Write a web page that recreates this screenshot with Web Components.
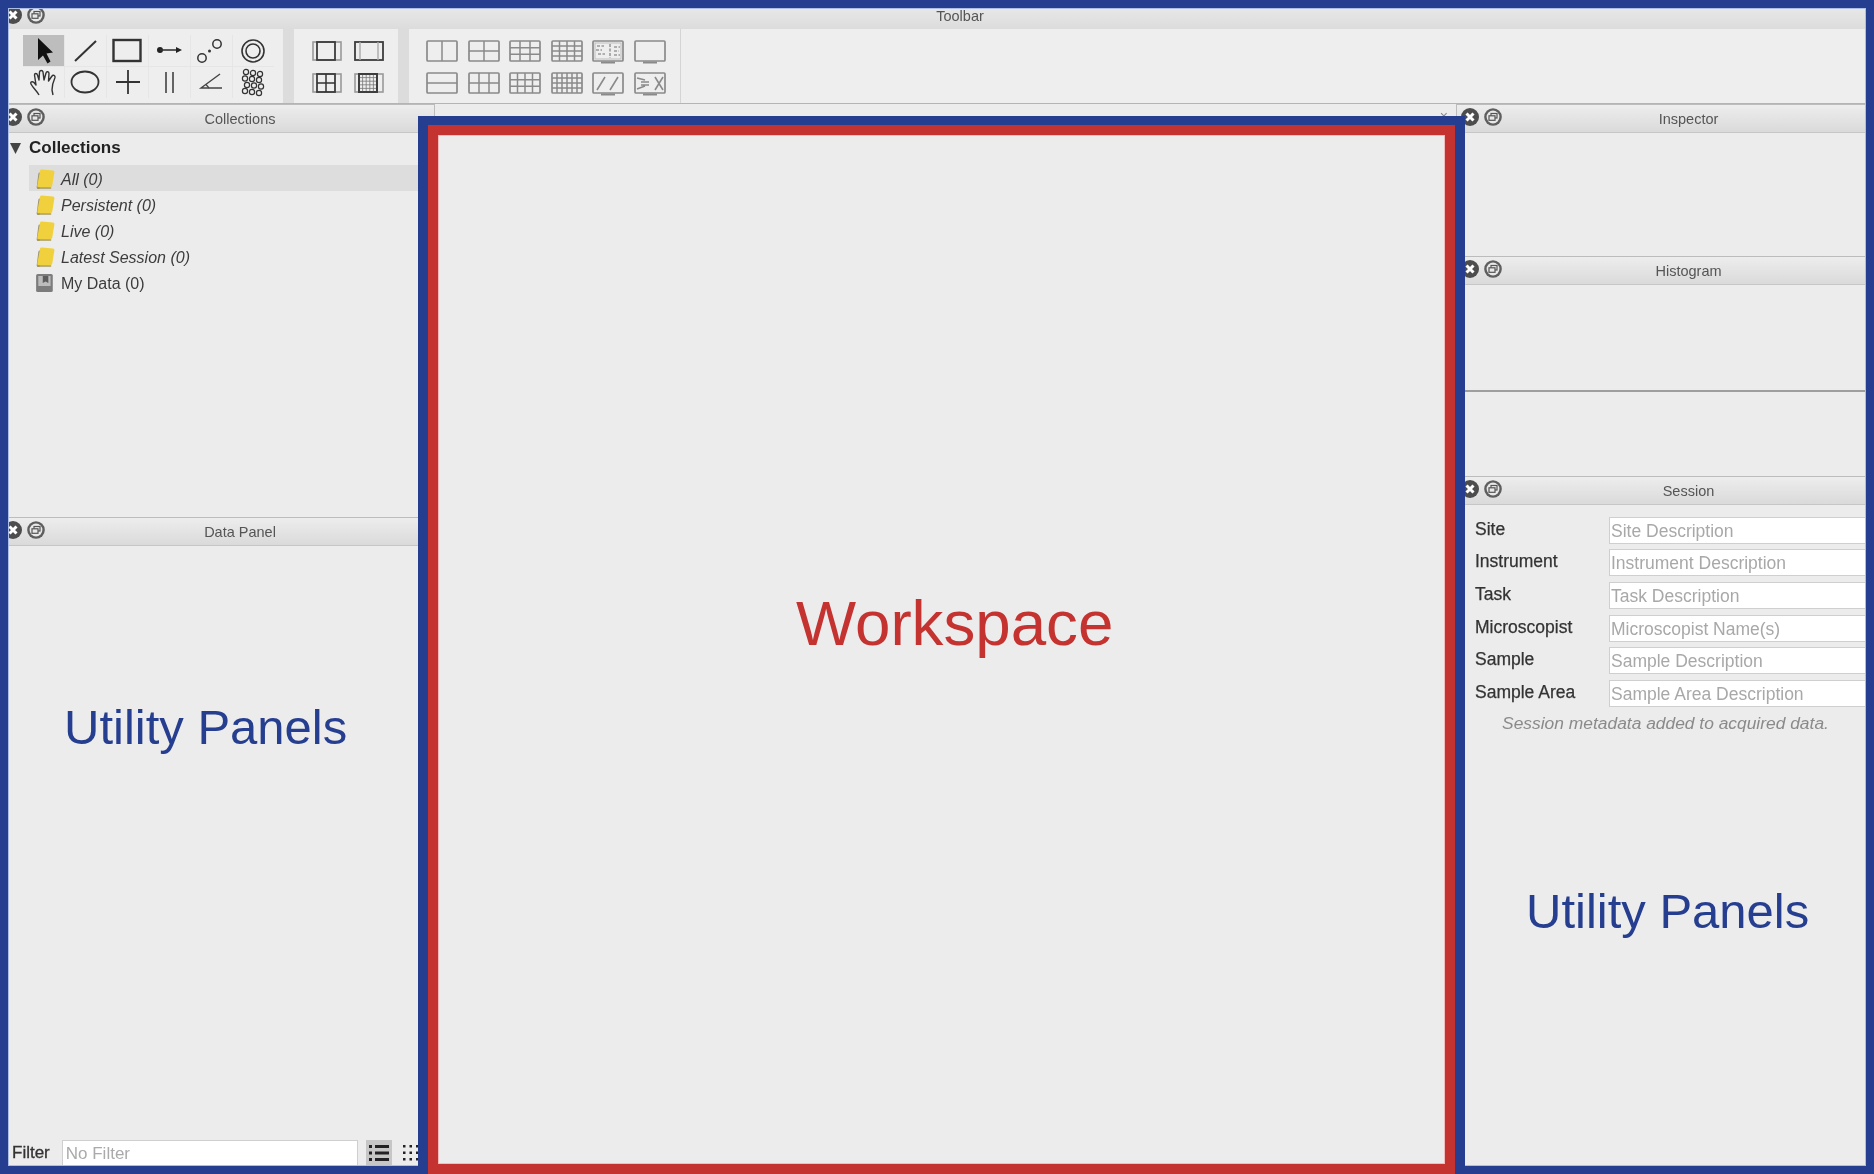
<!DOCTYPE html>
<html>
<head>
<meta charset="utf-8">
<title>Workspace</title>
<style>
    html, body { margin: 0; padding: 0; background: #ececec; }
    body { width: 1874px; height: 1174px; overflow: hidden; position: relative; font-family: "Liberation Sans", Arial, sans-serif; }
</style>
</head>
<body>
<app-shell>
    <tool-bar slot="top"></tool-bar>
    <dock-column slot="left" style="width:434px">
        <dock-panel label="Collections" style="height:413px"><collection-tree></collection-tree></dock-panel>
        <dock-panel label="Data Panel" style="flex:1"><data-panel></data-panel></dock-panel>
    </dock-column>
    <work-area slot="center"></work-area>
    <dock-column slot="right" style="width:417px">
        <dock-panel label="Inspector" style="height:152px"></dock-panel>
        <dock-panel label="Histogram" style="height:220px"><histogram-box></histogram-box></dock-panel>
        <dock-panel label="Session" style="flex:1"><session-form></session-form></dock-panel>
    </dock-column>
</app-shell>

<annot-frame color="#263e8f" halo="#aebde2" width="8" style="left:0;top:0;width:1874px;height:1174px"></annot-frame>
<annot-frame color="#263e8f" halo="#aebde2" width="10" style="left:418px;top:116px;width:1047px;height:1080px"></annot-frame>
<annot-frame color="#c53331" halo="#f2bcbc" width="10" style="left:428px;top:125px;width:1027px;height:1049px"></annot-frame>
<annot-label color="#c53331" size="63.7" style="left:796px;top:585px">Workspace</annot-label>
<annot-label color="#263e8f" size="49" style="left:64px;top:698px">Utility Panels</annot-label>
<annot-label color="#263e8f" size="49" style="left:1526px;top:882px">Utility Panels</annot-label>

<script>
// Small helpers to build the SVG of the toolbar icons
const svg = (w, h, body) => `<svg width="${w}" height="${h}" viewBox="0 0 ${w} ${h}" fill="none" stroke="#333" stroke-width="2">${body}</svg>`;

const gridLines = (x, y, w, h, cols, rows) => {
    let d = '';
    for (let i = 1; i < cols; i++) d += `M${x + w * i / cols} ${y}V${y + h}`;
    for (let i = 1; i < rows; i++) d += `M${x} ${y + h * i / rows}H${x + w}`;
    return d;
};

const lattice = () => {
    const pts = [[13,5],[20,6],[27,7],[12,11.5],[19,12],[26,13],[14,18],[21,18.5],[28,19.5],[12,24],[19,25],[26,26]];
    return pts.map(p => `<circle cx="${p[0]}" cy="${p[1]}" r="2.6" stroke-width="1.2"/>`).join('');
};

// First toolbar group, the graphic tools (6 x 2 cells)
const TOOL_ICONS = [
    `<path d="M15 3V25L20 20.5L24.5 28.5L27.5 26.5L23.5 18.5L30 17.5Z" fill="#111" stroke="none"/>`,
    `<path d="M10 26L31 6" stroke-width="2"/>`,
    `<rect x="6.5" y="5" width="27" height="21" stroke-width="2.4"/>`,
    `<circle cx="11" cy="15" r="3" fill="#222" stroke="none"/><path d="M11 15H31" stroke-width="1.6"/><path d="M33 15L27 12V18Z" fill="#222" stroke="none"/>`,
    `<circle cx="11" cy="23" r="4.2" stroke-width="1.5"/><circle cx="26" cy="9" r="4.2" stroke-width="1.5"/><circle cx="18.5" cy="16" r="1.5" fill="#333" stroke="none"/>`,
    `<circle cx="20" cy="16" r="11" stroke-width="1.6"/><circle cx="20" cy="16" r="7" stroke-width="1.6"/>`,
    `<path d="M16 28C14 24 10 21 8 17C7 15 9 14 11 15.5L13 18L11.5 8C11.5 6 14 6 14.5 8L16 13L16.5 5C17 3 19.5 3 20 5L21 13L23 6C23.5 4 26 4.5 26 6.5L25.5 14L29 9C30 7.5 32.5 8.5 32 10.5C30 15 29 20 29 23L30 28" stroke-width="1.4" stroke-linejoin="round"/>`,
    `<ellipse cx="20" cy="15" rx="13.5" ry="10.5" stroke-width="1.8"/>`,
    `<path d="M21 3V27M9 15H33" stroke-width="1.8"/>`,
    `<path d="M17 5V26M24 5V26" stroke-width="1.8" stroke="#555"/>`,
    `<path d="M29 7L10 21H31" stroke-width="1.4" stroke="#444"/><path d="M15 17.5L18 21" stroke-width="1.2" stroke="#444"/>`,
    lattice()
];

// Second toolbar group, image display modes
const frameIcon = (inner, dark) => `
    <rect x="7" y="6" width="28" height="18" stroke="${dark ? '#3c3c3c' : '#999'}" stroke-width="${dark ? 1.8 : 1.6}"/>
    ${dark ? '<path d="M12 6V24M30 6V24" stroke="#aaa" stroke-width="1.4"/>' : '<rect x="11" y="6" width="18" height="18" stroke="#3c3c3c" stroke-width="1.8"/>'}
    ${inner}`;

const MODE_ICONS = [
    frameIcon('', false),
    frameIcon('', true),
    frameIcon(`<path d="${gridLines(11, 6, 18, 18, 2, 2)}" stroke-width="1.5"/>`, false),
    frameIcon(`<path d="${gridLines(11, 6, 18, 18, 5, 5)}" stroke-width=".8" stroke="#777"/><rect x="11" y="6" width="18" height="18" stroke="#3c3c3c" stroke-width="1.8"/>`, false)
];

// Third toolbar group, the workspace layouts
const layoutIcon = (cols, rows, extra) => `
    <rect x="6" y="5" width="30" height="20" rx="1" stroke="#8a8a8a" stroke-width="1.7"/>
    <path d="${gridLines(6, 5, 30, 20, cols, rows)}" stroke="#8a8a8a" stroke-width="1.5"/>${extra || ''}`;

const MONITOR = `<path d="M14 26.5H28" stroke="#8a8a8a" stroke-width="2"/>`;

const LAYOUT_ICONS = [
    layoutIcon(2, 1),
    layoutIcon(2, 2),
    layoutIcon(3, 3),
    layoutIcon(4, 4),
    layoutIcon(1, 1, MONITOR + `<path d="M10 10H17M9 14H15M11 18H18M23 8V22M27 11H33M27 15H32M27 19H33" stroke="#9a9a9a" stroke-width="1.6" stroke-dasharray="3 1.5"/><rect x="8" y="7" width="26" height="16" stroke="#bdbdbd" stroke-width="1"/>`),
    layoutIcon(1, 1, MONITOR),
    layoutIcon(1, 2),
    layoutIcon(3, 2),
    layoutIcon(4, 3),
    layoutIcon(6, 4),
    layoutIcon(1, 1, MONITOR + `<path d="M10 22L18 9M23 22L31 9" stroke="#8a8a8a" stroke-width="1.6"/>`),
    layoutIcon(1, 1, MONITOR + `<path d="M26 9L34 22M34 9L26 22M8 10L16 12M8 21L16 18M12 14H20M12 17H20" stroke="#8a8a8a" stroke-width="1.6"/>`)
];

// Page skeleton: toolbar on top and three columns under it
class AppShell extends HTMLElement {
    constructor() {
        super();
        this.attachShadow({ mode: 'open' });
        this.shadowRoot.innerHTML = `
            <style>
                :host { display: flex; flex-direction: column; width: 1874px; height: 1174px; background: #ececec; filter: blur(.45px); }
                .cols { flex: 1; display: flex; min-height: 0; }
                ::slotted([slot="center"]) { flex: 1; }
            </style>
            <slot name="top"></slot>
            <div class="cols">
                <slot name="left"></slot>
                <slot name="center"></slot>
                <slot name="right"></slot>
            </div>
        `;
    }
}

// The round close and float buttons of every panel title
class TitleButtons extends HTMLElement {
    constructor() {
        super();
        this.attachShadow({ mode: 'open' });
        this.shadowRoot.innerHTML = `
            <style>
                :host { display: flex; gap: 5px; padding-left: 4px; width: 42px; flex: none; }
                svg { display: block; }
            </style>
            <svg width="18" height="18" viewBox="0 0 18 18">
                <circle cx="9" cy="9" r="9" fill="#4d4d4d"/>
                <path d="M5.5 5.5L12.5 12.5M12.5 5.5L5.5 12.5" stroke="#fff" stroke-width="3"/>
            </svg>
            <svg width="18" height="18" viewBox="0 0 18 18" fill="none">
                <circle cx="9" cy="9" r="8.8" fill="#5e5e5e"/>
                <circle cx="9" cy="9" r="6.4" fill="#e8e8e8"/>
                <rect x="7" y="5.5" width="6" height="4.5" stroke="#555" stroke-width="1.2"/>
                <rect x="5" y="7.8" width="6" height="4.5" fill="#e8e8e8" stroke="#555" stroke-width="1.2"/>
            </svg>
        `;
    }
}

class ToolBar extends HTMLElement {
    constructor() {
        super();
        this.attachShadow({ mode: 'open' });
        this.shadowRoot.innerHTML = `
            <style>
                :host { display: block; flex: none; height: 104px; box-sizing: border-box; border-bottom: 1px solid #b4b4b4; background: #eeeeee; }
                .title { height: 29px; box-sizing: border-box; padding-top: 4px; display: flex; align-items: center; background: linear-gradient(#ececec, #dcdcdc); }
                .title title-buttons { margin-top: -3px; }
                .title span { flex: 1; text-align: center; font-size: 14.5px; color: #555; margin-top: -2px; }
                .body { display: flex; height: 74px; }
                .grp { box-sizing: border-box; padding-top: 7px; }
                .tools { width: 283px; padding-left: 23px; padding-top: 6px; }
                .modes { width: 104px; padding-left: 12px; }
                .layouts { width: 272px; padding-left: 12px; border-right: 1px solid #d4d4d4; }
                .sep { width: 11px; background: #dcdcdc; }
                .grid { display: grid; width: fit-content; grid-template-columns: repeat(6, 41px); grid-auto-rows: 31px; gap: 1px; }
                .tools .grid { background: #e6e6e6; }
                .layouts .grid { column-gap: .6px; }
                .modes .grid { grid-template-columns: repeat(2, 41px); }
                .cell { background: #eeeeee; display: flex; }
                .cell.on { background: #bdbdbd; }
            </style>
            <div class="title"><title-buttons></title-buttons><span>Toolbar</span></div>
            <div class="body">
                <div class="grp tools"><div class="grid">${TOOL_ICONS.map((s, i) => `<div class="cell ${i === 0 ? 'on' : ''}">${svg(41, 31, s)}</div>`).join('')}</div></div>
                <div class="sep"></div>
                <div class="grp modes"><div class="grid">${MODE_ICONS.map(s => `<div class="cell">${svg(41, 31, s)}</div>`).join('')}</div></div>
                <div class="sep"></div>
                <div class="grp layouts"><div class="grid">${LAYOUT_ICONS.map(s => `<div class="cell">${svg(41, 31, s)}</div>`).join('')}</div></div>
            </div>
        `;
    }
}

class DockColumn extends HTMLElement {
    constructor() {
        super();
        this.attachShadow({ mode: 'open' });
        this.shadowRoot.innerHTML = `
            <style>
                :host { display: flex; flex-direction: column; flex: none; box-sizing: border-box; }
            </style>
            <slot></slot>
        `;
    }
}

class DockPanel extends HTMLElement {
    constructor() {
        super();
        this.attachShadow({ mode: 'open' });
        this.shadowRoot.innerHTML = `
            <style>
                :host { display: flex; flex-direction: column; box-sizing: border-box; min-height: 0; border-top: 1px solid #bcbcbc; }
                header { flex: none; height: 28px; box-sizing: border-box; display: flex; align-items: center; background: linear-gradient(#ededed, #dadada); border-bottom: 1px solid #c6c6c6; }
                title-buttons { margin: -3px 1px 0 0; }
                span { flex: 1; text-align: center; font-size: 14.5px; color: #555; padding-right: 1px; }
                .content { flex: 1; display: flex; flex-direction: column; min-height: 0; }
            </style>
            <header><title-buttons></title-buttons><span></span></header>
            <div class="content"><slot></slot></div>
        `;
        this.shadowRoot.querySelector('span').textContent = this.getAttribute('label');
    }
}

// Yellow folders for the smart collections, a grey book for the persistent one
class CollectionRow extends HTMLElement {
    constructor() {
        super();
        this.attachShadow({ mode: 'open' });
        const book = this.hasAttribute('book');
        const icon = book
            ? `<rect x="1" y="1" width="15" height="18" rx="1.5" fill="#7c7c7c"/><rect x="3" y="3" width="11" height="10" fill="#bcbcbc"/><path d="M7 3H12V10L9.5 8.5L7 10Z" fill="#5c5c5c"/>`
            : `<path d="M3 18.5L4.5 5" stroke="#9c9474" stroke-width="3" stroke-linecap="round"/>
               <path d="M6 2L16 3L14 16.5L3.5 17Z" fill="#f0d03c" stroke="#f0d03c" stroke-width="3" stroke-linejoin="round"/>
               <path d="M2.5 19H14" stroke="#a79a5c" stroke-width="1.5" stroke-linecap="round"/>`;
        this.shadowRoot.innerHTML = `
            <style>
                :host { display: flex; align-items: center; box-sizing: border-box; height: 26px; padding: 4px 0 0 6px; font-size: 16px; color: #3c3c3c; }
                :host([selected]) { background: #dddddd; }
                :host(:not([book])) { font-style: italic; }
                svg { display: block; margin-right: 6px; margin-top: -2px; }
            </style>
            <svg width="20" height="20" viewBox="0 0 18 20" preserveAspectRatio="none" fill="none">${icon}</svg><slot></slot>
        `;
    }
}

class CollectionTree extends HTMLElement {
    constructor() {
        super();
        this.attachShadow({ mode: 'open' });
        this.shadowRoot.innerHTML = `
            <style>
                :host { display: block; padding: 0 16px 0 0; }
                .head { display: flex; align-items: center; height: 30px; margin-bottom: 2px; font-size: 17px; font-weight: bold; color: #222; }
                .head svg { margin: 0 8px 0 10px; display: block; }
                .rows { margin-left: 29px; }
            </style>
            <div class="head">
                <svg width="11" height="12" viewBox="0 0 11 12"><path d="M0 1H11L5.5 12Z" fill="#444"/></svg>Collections
            </div>
            <div class="rows">
                <collection-row selected>All (0)</collection-row>
                <collection-row>Persistent (0)</collection-row>
                <collection-row>Live (0)</collection-row>
                <collection-row>Latest Session (0)</collection-row>
                <collection-row book>My Data (0)</collection-row>
            </div>
        `;
    }
}

class DataPanel extends HTMLElement {
    constructor() {
        super();
        this.attachShadow({ mode: 'open' });
        this.shadowRoot.innerHTML = `
            <style>
                :host { flex: 1; display: flex; flex-direction: column; justify-content: flex-end; }
                .bar { display: flex; align-items: center; height: 26px; margin-bottom: 8px; padding-left: 12px; font-size: 17px; color: #333; -webkit-text-stroke: .3px #333; }
                .field { box-sizing: border-box; width: 296px; height: 26px; margin-left: 12px; padding-left: 3px; background: #fff; border: 1px solid #cfcfcf; color: #aaa; line-height: 26px; -webkit-text-stroke: 0; }
                .btn { display: flex; align-items: center; justify-content: center; width: 26px; height: 26px; margin-left: 8px; }
                .btn.on { background: #c6c6c6; }
            </style>
            <div class="bar">
                Filter
                <div class="field">No Filter</div>
                <div class="btn on">
                    <svg width="22" height="18" viewBox="0 0 22 18" fill="#222"><path d="M1 1h3v3H1zM7 1h14v3H7zM1 7.5h3v3H1zM7 7.5h14v3H7zM1 14h3v3H1zM7 14h14v3H7z"/></svg>
                </div>
                <div class="btn">
                    <svg width="22" height="18" viewBox="0 0 22 18" fill="#222"><path d="M1 1h2.5v2.5H1zM7.5 1H10v2.5H7.5zM14 1h2.5v2.5H14zM1 7.5h2.5V10H1zM7.5 7.5H10V10H7.5zM14 7.5h2.5V10H14zM1 14h2.5v2.5H1zM7.5 14H10v2.5H7.5zM14 14h2.5v2.5H14z"/></svg>
                </div>
            </div>
        `;
    }
}

// Mostly covered by the workspace frames, only the tab strip peeks out
class WorkArea extends HTMLElement {
    constructor() {
        super();
        this.attachShadow({ mode: 'open' });
        this.shadowRoot.innerHTML = `
            <style>
                :host { display: block; box-sizing: border-box; background: #ececec; border-left: 1px solid #bcbcbc; border-right: 1px solid #bcbcbc; }
                .close { height: 12px; margin-top: 6px; padding-right: 8px; text-align: right; font-size: 14px; line-height: 12px; color: #888; }
            </style>
            <div class="close">×</div>
        `;
    }
}

class HistogramBox extends HTMLElement {
    constructor() {
        super();
        this.attachShadow({ mode: 'open' });
        this.shadowRoot.innerHTML = `
            <style>
                :host { display: block; height: 105px; box-sizing: content-box; border-bottom: 2px solid #9e9e9e; }
            </style>
        `;
    }
}

class SessionField extends HTMLElement {
    constructor() {
        super();
        this.attachShadow({ mode: 'open' });
        this.shadowRoot.innerHTML = `
            <style>
                :host { display: grid; grid-template-columns: 134px 1fr; align-items: center; height: 32.6px; font-size: 17.5px; color: #333; }
                label { -webkit-text-stroke: .25px #333; margin-top: -2px; }
                .field { box-sizing: border-box; height: 27px; padding-left: 1px; background: #fff; border: 1px solid #cfcfcf; color: #a8a8a8; line-height: 27px; white-space: nowrap; overflow: hidden; }
            </style>
            <label></label><div class="field"></div>
        `;
        this.shadowRoot.querySelector('label').textContent = this.getAttribute('label');
        this.shadowRoot.querySelector('.field').textContent = this.getAttribute('hint');
    }
}

class SessionForm extends HTMLElement {
    constructor() {
        super();
        this.attachShadow({ mode: 'open' });
        this.shadowRoot.innerHTML = `
            <style>
                :host { display: block; padding: 9px 8px 0 18px; }
                p { margin: 3px 0 0 0; padding-right: 10px; text-align: center; font-style: italic; font-size: 17.4px; color: #8a8a8a; white-space: nowrap; }
            </style>
            <session-field label="Site" hint="Site Description"></session-field>
            <session-field label="Instrument" hint="Instrument Description"></session-field>
            <session-field label="Task" hint="Task Description"></session-field>
            <session-field label="Microscopist" hint="Microscopist Name(s)"></session-field>
            <session-field label="Sample" hint="Sample Description"></session-field>
            <session-field label="Sample Area" hint="Sample Area Description"></session-field>
            <p>Session metadata added to acquired data.</p>
        `;
    }
}

// The coloured boxes and captions drawn over the screenshot
class AnnotFrame extends HTMLElement {
    constructor() {
        super();
        this.attachShadow({ mode: 'open' });
        const c = this.getAttribute('color');
        const w = this.getAttribute('width');
        const halo = this.getAttribute('halo');
        this.shadowRoot.innerHTML = `
            <style>
                :host { position: absolute; box-sizing: border-box; border: ${w}px solid ${c}; box-shadow: inset 0 0 0 1px ${halo}; pointer-events: none; }
            </style>
        `;
    }
}

class AnnotLabel extends HTMLElement {
    constructor() {
        super();
        this.attachShadow({ mode: 'open' });
        this.shadowRoot.innerHTML = `
            <style>
                :host { position: absolute; white-space: nowrap; line-height: 1.2; color: ${this.getAttribute('color')}; font-size: ${this.getAttribute('size')}px; }
            </style>
            <slot></slot>
        `;
    }
}

customElements.define('title-buttons', TitleButtons);
customElements.define('app-shell', AppShell);
customElements.define('tool-bar', ToolBar);
customElements.define('dock-column', DockColumn);
customElements.define('dock-panel', DockPanel);
customElements.define('collection-row', CollectionRow);
customElements.define('collection-tree', CollectionTree);
customElements.define('data-panel', DataPanel);
customElements.define('work-area', WorkArea);
customElements.define('histogram-box', HistogramBox);
customElements.define('session-field', SessionField);
customElements.define('session-form', SessionForm);
customElements.define('annot-frame', AnnotFrame);
customElements.define('annot-label', AnnotLabel);
</script>
</body>
</html>
